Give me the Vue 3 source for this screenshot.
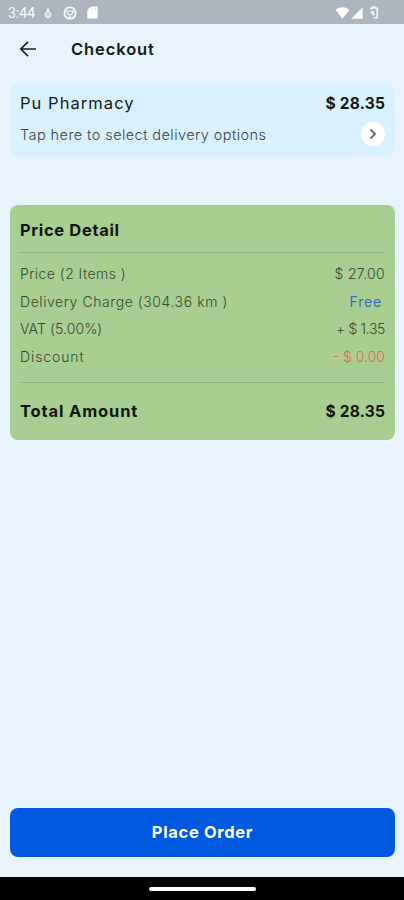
<script setup>
const rows = [
  { label: 'Price (2 Items )', value: '$ 27.00', kind: 'price' },
  { label: 'Delivery Charge (304.36 km )', value: 'Free', kind: 'delivery' },
  { label: 'VAT (5.00%)', value: '+ $ 1.35', kind: 'vat' },
  { label: 'Discount', value: '- $ 0.00', kind: 'discount' },
]
</script>

<template>
  <div class="screen">
    <div class="status">
      <span class="clock">3:44</span>
      <svg class="flame" width="8" height="12" viewBox="0 0 8 12"><path d="M4 .7v4M4 3.800 1.500 6.500v2.300L4 10.900l2.500-2.100V6.500L4 3.800Zm0 3v2" fill="none" stroke="#f3f6f9" stroke-width="1.500" /></svg>
      <svg class="globe" width="14" height="14" viewBox="0 0 14 14" fill="none" stroke="#f7f9fb" stroke-width="1.700"><circle cx="7" cy="7" r="5.700" /><path d="M1.500 6.500 4 5h6l2.500 1.500M4 5l1 3.500h4L10 5M7 8.500V12" stroke-width="1.200" /></svg>
      <svg class="card-icon" width="11" height="13" viewBox="0 0 11 13"><path d="M4 .5h5.500q1.200 0 1.200 1.200v9.600q0 1.200-1.200 1.200h-8Q.3 12.500.3 11.300V4.200Z" fill="#fff" /><path d="M4.500 2v2M6.500 2v2M8.500 2v2" stroke="#d4d9df" stroke-width=".8" /></svg>
      <span class="grow"></span>
      <svg width="15" height="12" viewBox="0 0 15 12"><path d="M.4 2.700Q7.500-2.200 14.600 2.700L7.500 11.700Z" fill="#fff" /></svg>
      <svg class="signal" width="12" height="12" viewBox="0 0 12 12"><path d="M11.700.3v11.500H.2Z" fill="#fff" /></svg>
      <svg class="battery" width="9" height="13" viewBox="0 0 9 13" fill="none" stroke="#f5f8fa" stroke-width="1.600"><path d="M1 3.500V2.300h1.800V1h2.700v1.300h1.800v9.400H3.500M.5 6.500H4M3 5v3.500h2" /></svg>
    </div>

    <header class="bar">
      <svg width="18" height="18" viewBox="0 0 18 18"><path d="M17 9H2M9 1.800 1.800 9 9 16.200" fill="none" stroke="#182129" stroke-width="1.700" /></svg>
      <h1 class="title">Checkout</h1>
    </header>

    <section class="store">
      <div class="line">
        <span class="store-name">Pu Pharmacy</span>
        <span class="amount">$ 28.35</span>
      </div>
      <div class="line option-line">
        <span class="options">Tap here to select delivery options</span>
        <span class="go"><svg width="8" height="12" viewBox="0 0 8 12"><path d="m1.500 1.500 4.500 4.500-4.500 4.500" fill="none" stroke="#6b6b6b" stroke-width="1.900" /></svg></span>
      </div>
    </section>

    <section class="detail">
      <h2 class="heading">Price Detail</h2>
      <div class="rows">
        <div v-for="row in rows" :key="row.kind" class="line row" :class="row.kind">
          <span class="label">{{ row.label }}</span>
          <span class="value">{{ row.value }}</span>
        </div>
      </div>
      <div class="line total">
        <span class="total-label">Total Amount</span>
        <span class="amount">$ 28.35</span>
      </div>
    </section>

    <button class="order"><span>Place Order</span></button>
    <footer class="nav"><span class="handle"></span></footer>
  </div>
</template>

<style>
body { margin: 0; }
</style>

<style scoped>
.screen {
  box-sizing: border-box;
  width: 404px;
  height: 900px;
  display: flex;
  flex-direction: column;
  background: #e8f3fe;
  font-family: Inter, "Open Sans", sans-serif;
  color: #101b16;
  overflow: hidden;
  white-space: nowrap;
}
.status {
  height: 24px;
  box-sizing: border-box;
  padding: 1px 25px 0 8px;
  display: flex;
  align-items: center;
  flex: none;
  background: #adb5bf;
}
.clock { width: 35px; font: 400 14px/22px Roboto, sans-serif; color: #f8fafc; }
.flame { margin-left: 1px; }
.globe { margin-left: 11px; }
.card-icon { margin-left: 10px; }
.grow { flex: 1; }
.signal { margin-left: 1px; }
.battery { margin-left: 7px; }
.bar {
  height: 59px;
  flex: none;
  display: flex;
  align-items: flex-start;
  box-sizing: border-box;
  padding: 15px 0 0 19px;
}
.bar svg { margin-top: 1px; }
.title { margin: 0 0 0 34px; font-size: 16.500px; line-height: 21px; font-weight: 600; letter-spacing: .9px; }
.store {
  height: 73px;
  flex: none;
  box-sizing: border-box;
  margin: 0 9px 0 10px;
  padding: 10px 10px 0;
  border-radius: 9px;
  background: #d9f0ff;
}
.line { display: flex; justify-content: space-between; align-items: center; }
.store .line { height: 20px; }
.store .option-line { height: 24px; margin-top: 9px; }
.store-name { font-size: 16.500px; font-weight: 400; letter-spacing: 1.050px; }
.amount { font-size: 15.500px; font-weight: 700; letter-spacing: .2px; }
.options { font-size: 14.500px; font-weight: 300; letter-spacing: .42px; color: #34464f; }
.go { width: 24px; height: 24px; border-radius: 50%; background: #fff; display: grid; place-items: center; }
.detail {
  height: 235px;
  flex: none;
  box-sizing: border-box;
  margin: 49px 9px 0 10px;
  padding: 0 10px;
  border-radius: 8px;
  background: #a8ce92;
}
.heading { margin: 0; height: 47px; font-size: 16.500px; line-height: 51px; font-weight: 700; letter-spacing: .65px; color: #0d1609; }
.rows {
  height: 131px;
  box-sizing: border-box;
  border-top: 1px solid #8fb17d;
  border-bottom: 1px solid #8fb17d;
  padding-top: 7px;
}
.row { height: 27.600px; font-size: 14px; font-weight: 300; color: #354a2d; }
.price .label { letter-spacing: .45px; }
.price .value { letter-spacing: .3px; }
.delivery .label { letter-spacing: .57px; }
.delivery .value { color: #3c6bbc; margin-right: 3px; letter-spacing: .8px; font-weight: 400; }
.vat .label { letter-spacing: .1px; }
.vat .value { letter-spacing: -.35px; }
.discount .label { letter-spacing: .9px; }
.discount .value { color: #f0604c; }
.total { height: 56px; color: #0d1609; }
.total-label { font-size: 16.500px; font-weight: 700; letter-spacing: .85px; }
.order {
  width: 385px;
  height: 49px;
  flex: none;
  margin: auto 9px 20px 10px;
  padding: 0;
  border: 0;
  border-radius: 8px;
  background: #0059df;
  color: #fff;
  font: 700 16.500px/49px Inter, sans-serif;
  letter-spacing: .65px;
}
.nav { height: 23px; flex: none; display: grid; place-items: center; background: #000; }
.handle { width: 107px; height: 4px; border-radius: 2px; background: #fff; }
</style>
